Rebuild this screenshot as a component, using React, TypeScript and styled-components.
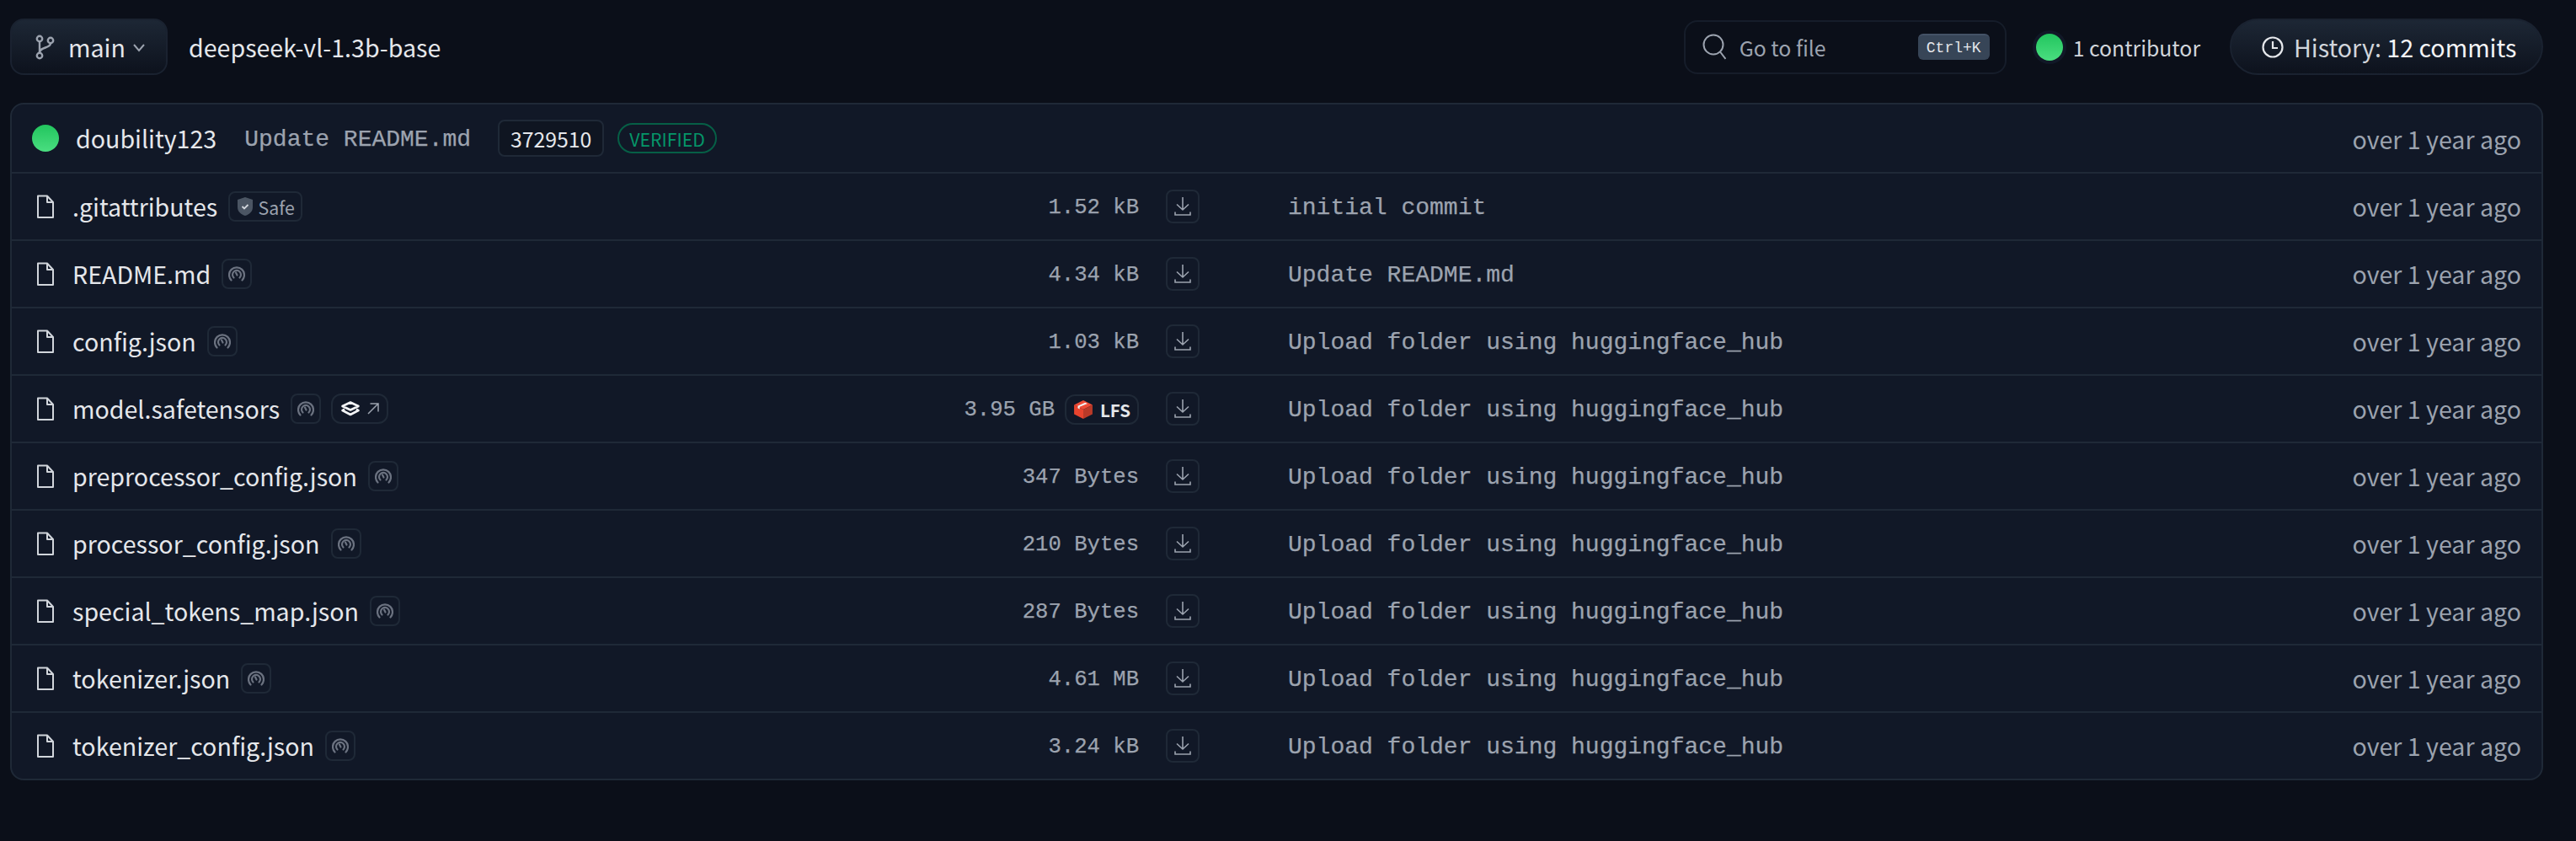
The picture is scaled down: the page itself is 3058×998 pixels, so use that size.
import * as React from 'react';
import styled, { createGlobalStyle } from 'styled-components';

const SANS = `"Noto Sans CJK SC", "Noto Sans", sans-serif`;
const MONO = `"Liberation Mono", "DejaVu Sans Mono", monospace`;

interface FileEntry {
  readonly name: string;
  readonly size: string;
  readonly commit: string;
  readonly safe?: boolean;
  readonly lfs?: boolean;
}

const FILES: FileEntry[] = [
  { name: '.gitattributes', size: '1.52 kB', commit: 'initial commit', safe: true },
  { name: 'README.md', size: '4.34 kB', commit: 'Update README.md' },
  { name: 'config.json', size: '1.03 kB', commit: 'Upload folder using huggingface_hub' },
  { name: 'model.safetensors', size: '3.95 GB', commit: 'Upload folder using huggingface_hub', lfs: true },
  { name: 'preprocessor_config.json', size: '347 Bytes', commit: 'Upload folder using huggingface_hub' },
  { name: 'processor_config.json', size: '210 Bytes', commit: 'Upload folder using huggingface_hub' },
  { name: 'special_tokens_map.json', size: '287 Bytes', commit: 'Upload folder using huggingface_hub' },
  { name: 'tokenizer.json', size: '4.61 MB', commit: 'Upload folder using huggingface_hub' },
  { name: 'tokenizer_config.json', size: '3.24 kB', commit: 'Upload folder using huggingface_hub' }
];

const GlobalStyle = createGlobalStyle`
  html, body {
    margin: 0;
    background: #0b0f19;
  }
  * {
    box-sizing: border-box;
  }
`;

const Page = styled.div`
  height: 998px;
  padding: 22px 39px 0 12px;
  background: #0b0f19;
  font-family: ${SANS};
  color: #e5e7eb;
  white-space: nowrap;
  overflow: hidden;
`;

const Toolbar = styled.div`
  display: flex;
  align-items: center;
  height: 67px;
  margin-bottom: 33px;
`;

const GradientButton = styled.div`
  display: flex;
  align-items: center;
  height: 67px;
  border: 2px solid #1a2230;
  background: linear-gradient(to bottom, #1d2735, #0d121d);
`;

const BranchButton = styled(GradientButton)`
  width: 187px;
  padding-left: 27px;
  border-radius: 16px;
  font-size: 28.6px;
  color: #e5e7eb;
`;

const BranchName = styled.span`
  margin-left: 16px;
  margin-right: 8px;
`;

const RepoName = styled.div`
  margin-left: 25px;
  font-size: 28.6px;
  color: #e5e7eb;
`;

const SearchBox = styled.div`
  display: flex;
  align-items: center;
  width: 383px;
  height: 64px;
  margin-left: auto;
  padding: 0 18px 0 20px;
  border: 2px solid #161d2a;
  border-radius: 16px;
  font-size: 24.8px;
  color: #9ca3af;
`;

const SearchLabel = styled.span`
  margin-left: 16px;
`;

const Kbd = styled.span`
  display: flex;
  align-items: center;
  justify-content: center;
  width: 85px;
  height: 31px;
  margin-left: auto;
  border-radius: 6px;
  background: #374557;
  border-top: 2px solid #445266;
  font-family: ${MONO};
  font-size: 18px;
  color: #e5e7eb;
`;

const Contributors = styled.div`
  display: flex;
  align-items: center;
  margin-left: 35px;
  font-size: 24.8px;
  color: #d1d5db;
`;

const Dot = styled.span<{ $ring?: boolean }>`
  flex: none;
  width: 32px;
  height: 32px;
  border-radius: 50%;
  background: linear-gradient(to bottom, #22c55e, #4ade80);
  box-shadow: ${({ $ring }) => ($ring ? '0 0 0 4px #111827' : 'none')};
`;

const ContributorLabel = styled.span`
  margin-left: 12px;
`;

const HistoryButton = styled(GradientButton)`
  width: 372px;
  margin-left: 35px;
  padding-left: 36px;
  border-radius: 34px;
  font-size: 28.6px;
  color: #d1d5db;
`;

const HistoryLabel = styled.span`
  margin-left: 12px;
`;

const HistoryCount = styled.span`
  color: #f3f4f6;
`;

const Table = styled.div`
  border: 2px solid #1f2937;
  border-radius: 16px;
  background: #111827;
  overflow: hidden;
`;

const HeaderRow = styled.div`
  display: flex;
  align-items: center;
  height: 82px;
  padding: 0 24px;
  border-bottom: 2px solid #1f2937;
`;

const Author = styled.span`
  margin-left: 20px;
  padding-bottom: 2px;
  font-size: 28.6px;
  color: #e5e7eb;
`;

const MonoText = styled.span`
  padding-top: 2px;
  font-family: ${MONO};
  -webkit-text-stroke: 0.25px currentColor;
  color: #9ca3af;
`;

const CommitTitle = styled(MonoText)`
  margin-left: 33px;
  font-size: 28px;
`;

const CommitHash = styled.span`
  display: flex;
  align-items: center;
  justify-content: center;
  width: 126px;
  height: 44px;
  margin-left: 32px;
  border: 2px solid #1f2937;
  border-radius: 8px;
  background: #0f1521;
  font-size: 24.8px;
  color: #e5e7eb;
`;

const Verified = styled.span`
  display: flex;
  align-items: center;
  justify-content: center;
  width: 118px;
  height: 36px;
  margin-left: 16px;
  border: 2px solid #065f46;
  border-radius: 18px;
  font-size: 21.3px;
  color: #059669;
`;

const TimeCell = styled.span`
  margin-left: auto;
  font-size: 28.6px;
  color: #9ca3af;
`;

const RowTime = styled(TimeCell)`
  padding-bottom: 2px;
`;

const Row = styled.div`
  display: grid;
  grid-template-columns: 1040px 298px 177px 1fr auto;
  align-items: center;
  height: 80px;
  padding-right: 24px;
  border-bottom: 2px solid #1f2937;

  &:last-child {
    height: 78px;
    border-bottom: 0;
  }
`;

const NameCell = styled.div`
  display: flex;
  align-items: center;
  padding-left: 30px;
`;

const FileName = styled.span`
  margin-left: 22px;
  margin-right: 13px;
  padding-bottom: 2px;
  font-size: 28.6px;
  color: #e5e7eb;
`;

const Badge = styled.span`
  display: inline-flex;
  align-items: center;
  justify-content: center;
  height: 36px;
  min-width: 36px;
  border: 2px solid #1f2937;
  border-radius: 8px;
  font-size: 21.3px;
  color: #9ca3af;
`;

const SafeBadge = styled(Badge)`
  width: 88px;
  gap: 6px;
`;

const XetBadge = styled(Badge)`
  width: 68px;
  margin-left: 12px;
  gap: 8px;
  border-radius: 12px;
`;

const SizeCell = styled(MonoText)`
  display: flex;
  align-items: center;
  justify-content: flex-end;
  font-size: 25.6px;
`;

const LfsBadge = styled(Badge)`
  width: 88px;
  margin-left: 12px;
  gap: 8px;
  border-radius: 12px;
  font-family: ${SANS};
  font-weight: 700;
  font-size: 20.5px;
  color: #e5e7eb;
  -webkit-text-stroke: 0;
`;

const DownloadCell = styled.div`
  padding-left: 32px;
`;

const DownloadButton = styled.span`
  display: flex;
  align-items: center;
  justify-content: center;
  width: 40px;
  height: 40px;
  border: 2px solid #1f2937;
  border-radius: 8px;
`;

const CommitCell = styled(MonoText)`
  font-size: 28px;
`;

const BranchIcon = () => (
  <svg width="24" height="30" viewBox="0 0 24 30" fill="none" stroke="#9ca3af" strokeWidth="2.4">
    <circle cx="6" cy="5" r="3.2" />
    <circle cx="6" cy="25" r="3.2" />
    <circle cx="19" cy="7" r="3.2" />
    <path d="M6 8.5v13M19 10.5c0 6-13 4-13 11" />
  </svg>
);

const Chevron = () => (
  <svg width="16" height="16" viewBox="0 0 16 16" fill="none" stroke="#9ca3af" strokeWidth="2">
    <path d="M2 5l6 7 6-7" />
  </svg>
);

const SearchIcon = () => (
  <svg width="28" height="32" viewBox="0 0 28 32" fill="none" stroke="#9ca3af" strokeWidth="2">
    <circle cx="13" cy="13" r="11.5" />
    <path d="M21 21.5L27.5 30" />
  </svg>
);

const ClockIcon = () => (
  <svg width="26" height="26" viewBox="0 0 26 26" fill="none" stroke="#e5e7eb" strokeWidth="2.2">
    <circle cx="13" cy="13" r="11.5" />
    <path d="M13 6v8h6" />
  </svg>
);

const FileIcon = () => (
  <svg width="20" height="28" viewBox="0 0 20 28" fill="none" stroke="#d1d5db" strokeWidth="2">
    <path d="M1 1.5h11l7 7.5v18H1z" strokeLinejoin="round" />
    <path d="M12 1.5V9h7" strokeLinejoin="round" />
  </svg>
);

const ShieldIcon = () => (
  <svg width="20" height="24" viewBox="0 0 20 24">
    <path d="M10 1l9 3v9c0 5-4 8.5-9 10C5 21.5 1 18 1 13V4z" fill="#4b5563" />
    <path d="M6.500 12l2.500 2.500 4.500-4.500" fill="none" stroke="#d1d5db" strokeWidth="1.8" />
  </svg>
);

const SignalIcon = () => (
  <svg width="20" height="20" viewBox="0 0 20 20" fill="none" stroke="#6b7280" strokeWidth="2.2" strokeLinecap="round">
    <path d="M3.5 17.5a9 9 0 1 1 13 0" />
    <path d="M6.5 14.5a5 5 0 1 1 7 0" />
    <path d="M9 8.500l1.500 3" />
  </svg>
);

const LayersIcon = () => (
  <svg width="24" height="18" viewBox="0 0 24 18" fill="none" stroke="#f3f4f6" strokeWidth="2.6" strokeLinejoin="round">
    <path d="M12 1.500l9.500 4.500L12 10.500 2.500 6z" />
    <path d="M5 9.500L2.500 11 12 16l9.500-5L19 9.500" />
  </svg>
);

const ArrowIcon = () => (
  <svg width="14" height="14" viewBox="0 0 14 14" fill="none" stroke="#9ca3af" strokeWidth="1.5">
    <path d="M1 13L13 1M3.500 1H13v9.500" />
  </svg>
);

const LfsIcon = () => (
  <svg width="24" height="24" viewBox="0 0 22 22">
    <path d="M11 1l10 5-10 5L1 6z" fill="#ef4b36" />
    <path d="M1 6l10 5v10L1 16z" fill="#e8442e" />
    <path d="M21 6l-10 5v10l10-5z" fill="#b93a28" />
    <path d="M5 9.500V7l8-3.500 2.500 1L7 8v2.500z" fill="#f3f4f6" />
  </svg>
);

const DownloadIcon = () => (
  <svg width="20" height="22" viewBox="0 0 20 22" fill="none" stroke="#9ca3af" strokeWidth="1.6">
    <path d="M10 0v15M3 8.500L10 15l7-6.500" />
    <path d="M1 17.500v3.500h18v-3.500" />
  </svg>
);

const FileRow = ({ name, size, commit, safe, lfs }: FileEntry) => (
  <Row>
    <NameCell>
      <FileIcon />
      <FileName>{name}</FileName>
      {safe ? (
        <SafeBadge>
          <ShieldIcon />
          Safe
        </SafeBadge>
      ) : (
        <Badge>
          <SignalIcon />
        </Badge>
      )}
      {lfs && (
        <XetBadge>
          <LayersIcon />
          <ArrowIcon />
        </XetBadge>
      )}
    </NameCell>
    <SizeCell>
      {size}
      {lfs && (
        <LfsBadge>
          <LfsIcon />
          LFS
        </LfsBadge>
      )}
    </SizeCell>
    <DownloadCell>
      <DownloadButton>
        <DownloadIcon />
      </DownloadButton>
    </DownloadCell>
    <CommitCell>{commit}</CommitCell>
    <RowTime>over 1 year ago</RowTime>
  </Row>
);

const App = () => (
  <Page>
    <GlobalStyle />
    <Toolbar>
      <BranchButton>
        <BranchIcon />
        <BranchName>main</BranchName>
        <Chevron />
      </BranchButton>
      <RepoName>deepseek-vl-1.3b-base</RepoName>
      <SearchBox>
        <SearchIcon />
        <SearchLabel>Go to file</SearchLabel>
        <Kbd>Ctrl+K</Kbd>
      </SearchBox>
      <Contributors>
        <Dot $ring />
        <ContributorLabel>1 contributor</ContributorLabel>
      </Contributors>
      <HistoryButton>
        <ClockIcon />
        <HistoryLabel>
          History: <HistoryCount>12 commits</HistoryCount>
        </HistoryLabel>
      </HistoryButton>
    </Toolbar>
    <Table>
      <HeaderRow>
        <Dot />
        <Author>doubility123</Author>
        <CommitTitle>Update README.md</CommitTitle>
        <CommitHash>3729510</CommitHash>
        <Verified>VERIFIED</Verified>
        <TimeCell>over 1 year ago</TimeCell>
      </HeaderRow>
      {FILES.map(file => (
        <FileRow key={file.name} {...file} />
      ))}
    </Table>
  </Page>
);

export default App;
